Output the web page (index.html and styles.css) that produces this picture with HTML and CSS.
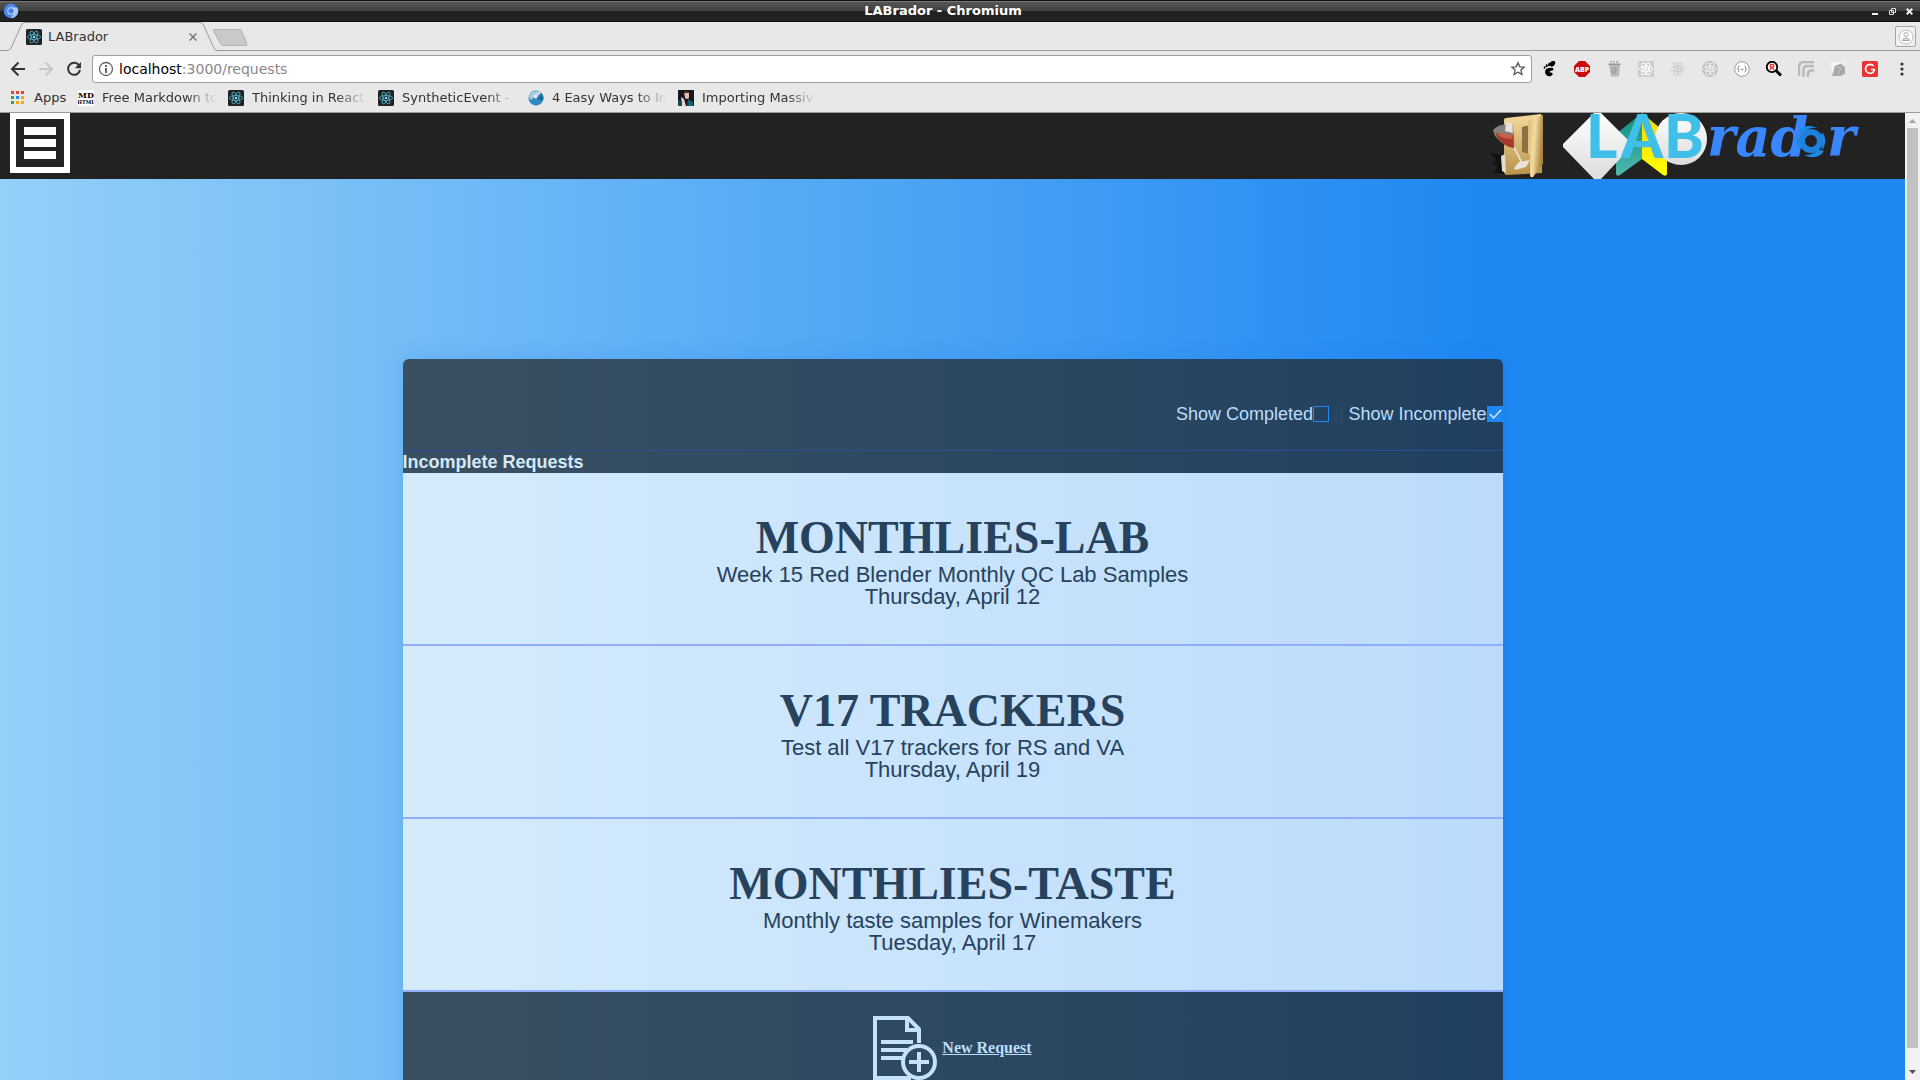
FILE: index.html
```html
<!DOCTYPE html>
<html lang="en">
<head>
<meta charset="utf-8">
<title>LABrador</title>
<link rel="stylesheet" href="styles.css">
</head>
<body>
<svg class="defs" width="0" height="0" aria-hidden="true">
  <symbol id="atom" viewBox="0 0 16 16">
    <g fill="none" stroke="currentColor"><ellipse cx="8" cy="8" rx="6.6" ry="2.6"/><ellipse cx="8" cy="8" rx="6.6" ry="2.6" transform="rotate(60 8 8)"/><ellipse cx="8" cy="8" rx="6.6" ry="2.6" transform="rotate(120 8 8)"/></g>
    <circle cx="8" cy="8" r="1.4" fill="currentColor"/>
  </symbol>
  <symbol id="react" viewBox="0 0 16 16">
    <rect width="16" height="16" rx="1.5" fill="#222"/>
    <g fill="none" stroke="#53b8d4" stroke-width=".8"><ellipse cx="8" cy="8" rx="6.6" ry="2.5"/><ellipse cx="8" cy="8" rx="6.6" ry="2.5" transform="rotate(60 8 8)"/><ellipse cx="8" cy="8" rx="6.6" ry="2.5" transform="rotate(120 8 8)"/></g>
    <circle cx="8" cy="8" r="1.3" fill="#7be0f8"/>
  </symbol>
</svg>

<div class="titlebar">
  <svg width="16" height="16" viewBox="0 0 16 16" aria-hidden="true"><circle cx="8" cy="8" r="7.2" fill="#4a87ec"/><path d="M8 4.4h6.2A7.2 7.2 0 0 1 8 15.2l3-5.2z" fill="#a8c7fa"/><circle cx="8" cy="8" r="3.7" fill="#c7dafa"/><circle cx="8" cy="8" r="2.7" fill="#3f7fe8"/></svg>
  <span class="window-title">LABrador - Chromium</span>
  <div class="window-buttons">
    <button aria-label="Minimize"><svg width="7" height="7"><path d="M0 6h6" stroke="#eee" stroke-width="2"/></svg></button>
    <button aria-label="Restore"><svg width="7" height="7"><path d="M2.5.5h4v4h-4zM.5 2.5h4v4h-4z" fill="none" stroke="#ddd"/></svg></button>
    <button aria-label="Close"><svg width="7" height="7"><path d="M.7.7l5.6 5.6M6.3.7L.7 6.3" stroke="#eee" stroke-width="2"/></svg></button>
  </div>
</div>

<div class="tabstrip">
  <div class="tab">
    <svg class="tab-shape" width="250" height="29" viewBox="0 0 250 29" aria-hidden="true">
      <path d="M0 28.5h7q3 0 4-2.500L22 2Q23 .5 25 .5H200Q202 .5 203 2L214 26q1 2.500 3 2.500H250V29H0z" fill="#e8e8e8"/>
      <path d="M0 28.500h7q3 0 4-2.500L22 2Q23 .5 25 .5H200Q202 .5 203 2L214 26q1 2.500 3 2.500H250" fill="none" stroke="#9b9b9b"/>
      <path d="M214 7.500h26q1 0 1.500 1L247 22q.4 1.500-1 1.500H223q-1.500 0-2-1L213.400 9q-.4-1.500.6-1.500z" fill="#c9c9c9" stroke="#b2b2b2"/>
    </svg>
    <svg width="16" height="16" aria-hidden="true"><use href="#react"/></svg>
    <span class="tab-title">LABrador</span>
    <button aria-label="Close tab"><svg width="8" height="8"><path d="M.5.5l7 7M7.500.5l-7 7" stroke="#777" stroke-width="1.500"/></svg></button>
  </div>
  <button class="profile" aria-label="Profile"><svg width="16" height="16" viewBox="0 0 16 16"><circle cx="8" cy="8" r="7" fill="#fff" stroke="#bbb"/><circle cx="8" cy="5.500" r="2" fill="#fff" stroke="#aaa"/><path d="M4.500 11.500q0-2.500 3.500-2.500t3.500 2.500z" fill="#ddd" stroke="#aaa"/></svg></button>
</div>

<div class="toolbar">
  <button aria-label="Back"><svg width="16" height="16"><path d="M15 8H2.500M8.500 1.500L2 8l6.500 6.500" fill="none" stroke="#333" stroke-width="2"/></svg></button>
  <button aria-label="Forward"><svg width="16" height="16"><path d="M1 8h12.500M7.500 1.500L14 8l-6.500 6.500" fill="none" stroke="#c8c8c8" stroke-width="2"/></svg></button>
  <button aria-label="Reload"><svg width="16" height="16"><path d="M13.300 4.800A6 6 0 1 0 14 9" fill="none" stroke="#333" stroke-width="2"/><path d="M15 1v6.200H8.800z" fill="#333"/></svg></button>
  <div class="omnibox">
    <svg width="16" height="16" aria-hidden="true"><circle cx="8" cy="8" r="6.500" fill="none" stroke="#666" stroke-width="1.300"/><path d="M8 7v5M8 4v2" stroke="#555" stroke-width="1.800"/></svg>
    <div class="url" role="textbox" aria-label="Address" contenteditable="true" spellcheck="false">localhost<span>:3000/requests</span></div>
    <button aria-label="Bookmark this page"><svg width="16" height="16" viewBox="0 0 16 16"><path d="M8 1.800l1.800 4 4.400.4-3.300 2.900 1 4.300L8 11.200l-3.900 2.200 1-4.300L1.800 6.200l4.400-.4z" fill="none" stroke="#555" stroke-width="1.300"/></svg></button>
  </div>
  <div class="extensions">
    <svg width="16" height="16"><g fill="#000"><ellipse cx="10.500" cy="3.300" rx="2.300" ry="3.200" transform="rotate(35 11.500 3)"/><ellipse cx="7.300" cy="3.400" rx="1.100" ry="1.900" transform="rotate(15 7 3)"/><ellipse cx="4.700" cy="4.700" rx="1" ry="1.600"/><ellipse cx="2.600" cy="6.500" rx=".9" ry="1.300"/><path d="M3.500 9C5 6.500 11 6 11.500 8.200c.3 1.800-4.200 1.500-4 2.800.2 1 2.400.2 3 1.200.7 1.600-1.500 3.300-3.500 3.100C4 15 2.300 11.500 3.500 9z"/></g></svg>
    <svg width="16" height="16"><path d="M5 0h6l5 5v6l-5 5H5l-5-5V5z" fill="#c70d0d"/><text x="8" y="11" class="abp">ABP</text></svg>
    <svg width="16" height="16"><path d="M3 3h11l-1 12q-4 1.500-8 0z" fill="#b8b8b8"/><path d="M2.500 2.500h12v1.500h-12z" fill="#999"/><path d="M4 .8h9" stroke="#888" stroke-dasharray="2 1"/><path d="M6 7h4v3H6v2h4" fill="none" stroke="#999"/></svg>
    <svg width="16" height="16"><path d="M0 0h16v16H0z" fill="#cdcdcd"/><use href="#atom" color="#fff"/></svg>
    <svg width="16" height="16"><use href="#atom" color="#cdcdcd"/></svg>
    <svg width="16" height="16"><circle cx="8" cy="8" r="8" fill="#c0c0c0"/><use href="#atom" color="#eee"/></svg>
    <svg width="16" height="16"><circle cx="8" cy="8" r="7.300" fill="#fff" stroke="#999"/><path d="M5.500 5Q4 5 4.500 6.500 4.500 8 3.500 8q1 0 1 1.500Q4 11 5.500 11M10.500 5Q12 5 11.500 6.500q0 1.500 1 1.500-1 0-1 1.500.5 1.500-1 1.500M6.500 8.500h3" fill="none" stroke="#888"/></svg>
    <svg width="16" height="16"><path d="M10 9.500l5 5" stroke="#000" stroke-width="3"/><circle cx="6" cy="6" r="5.200" fill="#fff" stroke="#000" stroke-width="1.800"/><path d="M4.500 9V3.500h2q1.500.3 1.500 1.500T6 6.500H5M6.200 6.500L8 9" fill="none" stroke="#e33" stroke-width="1.300"/></svg>
    <svg width="16" height="16"><path d="M1 15V6q0-5 5-5h10M5.500 16V9q0-4 4-4H16M10 16v-3q0-3.500 3-3.500h3" fill="none" stroke="#b9b9b9" stroke-width="2.500"/></svg>
    <svg width="16" height="16"><path d="M1 1h13l1 13H2z" fill="#f4f4f4"/><path d="M5 5l6-2.500L15 6v7l-5 2H3q-2-1 0-3z" fill="#a9a9a9"/><path d="M6 6l5 1-3 6" fill="none" stroke="#c4c4c4"/></svg>
    <svg width="16" height="16"><rect width="16" height="16" rx="1.500" fill="#e93434"/><path d="M11.500 5A4.500 4.500 0 1 0 12.500 8.500H9" fill="none" stroke="#fff" stroke-width="1.700"/></svg>
    <svg width="16" height="16"><g fill="#333"><circle cx="8" cy="3" r="1.600"/><circle cx="8" cy="8" r="1.600"/><circle cx="8" cy="13" r="1.600"/></g></svg>
  </div>
</div>

<nav class="bookmarks">
  <a href="#" class="apps"><svg width="13" height="13"><path d="M0 0h3v3H0zM5 0h3v3H5zM10 0h3v3h-3z" fill="#ea4335"/><path d="M0 5h3v3H0zM0 10h3v3H0z" fill="#34a058"/><path d="M5 5h3v3H5z" fill="#1a8cff"/><path d="M10 5h3v3h-3zM5 10h3v3H5zM10 10h3v3h-3z" fill="#f5a800"/></svg>Apps</a>
  <a href="#"><svg width="16" height="16"><path d="M0 0h16v16H0z" fill="#fff"/><text x="8" y="8" class="md">MD</text><text x="8" y="14" class="md-sub">HTML</text></svg><span>Free Markdown to</span></a>
  <a href="#"><svg width="16" height="16"><use href="#react"/></svg><span>Thinking in React</span></a>
  <a href="#"><svg width="16" height="16"><use href="#react"/></svg><span>SyntheticEvent - R</span></a>
  <a href="#"><svg width="16" height="16"><circle cx="8" cy="8" r="7.500" fill="#2c8cbf"/><path d="M2 4Q6-1 12 2q-1 4-5 4L3 10Q0 8 2 4z" fill="#a6cde0"/><path d="M9 9l5-5q3 4 0 7z" fill="#1a6b9c"/><circle cx="7.500" cy="6.500" r="2" fill="#dfe9ee"/><path d="M8 6l5-5" stroke="#ddd" stroke-width="2"/></svg><span>4 Easy Ways to Im</span></a>
  <a href="#"><svg width="16" height="16"><path d="M0 0h16v16H0z" fill="#15161f"/><path d="M6 2q4-2 5 1v5q-2 2-4 0z" fill="#e6bca8"/><path d="M6 2q3-2 5 0v1H6z" fill="#4a2a22"/><path d="M10 9l5 3v4H9z" fill="#17616f"/><path d="M3 7l3 2 2 7H4z" fill="#e9d4cc"/><path d="M0 10l4 1v5H0z" fill="#164c58"/></svg><span>Importing Massive</span></a>
</nav>

<div class="viewport">
  <div class="page">
    <header class="site-header">
      <button class="menu" aria-label="Menu"><i></i><i></i><i></i></button>
      <div class="brand">
        <a href="#" aria-label="Wine folder"><svg width="64" height="66" viewBox="0 0 64 66">
          <defs><linearGradient id="fold" x1="0" y1="0" x2="0" y2="1"><stop offset="0" stop-color="#f4d99c"/><stop offset="1" stop-color="#b8924c"/></linearGradient><linearGradient id="flap" x1="0" y1="0" x2="1" y2="0.300"><stop offset="0" stop-color="#d9b873"/><stop offset=".5" stop-color="#f3dba0"/><stop offset="1" stop-color="#a9843e"/></linearGradient></defs>
          <path d="M0 40l16 3v18L4 60l4-7-6-2 5-4z" fill="#111"/>
          <path d="M14 7q0-2 2-2l35-4 1 3v56l-36 2-2-2z" fill="url(#fold)"/>
          <path d="M32 14l8-2v29l-8-2z" fill="#8c7142"/>
          <path d="M38 8l15-6v49L43 64q-3 1-3-2V42l-2-2z" fill="url(#flap)"/>
          <path d="M11 43l4-2 1 19-4-2z" fill="#e4dcc8"/>
          <path d="M24 34l8 16" stroke="#e9dcc2" stroke-width="2"/>
          <path d="M3 17q6-7 19-6 3 10 2 24-11-2-19-12z" fill="#85807b"/>
          <path d="M16 9l6 1 1 10-8-2z" fill="#e8e2d9"/>
          <path d="M6 20l17 2 1 13q-10-1-17-11z" fill="#a83928"/>
          <path d="M8 20l15 2-1 4q-8 0-13-3z" fill="#c8614a"/>
          <path d="M24 55l5-6 11-2-4 7-11 3z" fill="#e8e2d8"/>
        </svg></a>
        <a href="#" aria-label="LABrador home"><svg width="300" height="66" viewBox="0 0 300 66">
          <defs><linearGradient id="pale" x1="0" y1="0" x2="0" y2="1"><stop offset="0" stop-color="#fff"/><stop offset="1" stop-color="#dcdcdc"/></linearGradient><linearGradient id="teal" x1="0" y1="0" x2="0" y2="1"><stop offset="0" stop-color="#0c8d7f"/><stop offset="1" stop-color="#50b8ae"/></linearGradient><linearGradient id="gold" x1="0" y1="0" x2="0" y2="1"><stop offset="0" stop-color="#ffd500"/><stop offset="1" stop-color="#ff0"/></linearGradient></defs>
          <path d="M79 0L53 21v40q1 3 4 1l22-16z" fill="url(#teal)"/>
          <path d="M79 0l25 21v40q-1 3-4 1L79 46z" fill="url(#gold)"/>
          <path d="M31 0h7l30 30q2 2 0 4L38 66h-7L0 34q-1-2 0-3z" fill="url(#pale)"/>
          <circle cx="118" cy="26" r="26" fill="url(#pale)"/>
          <g class="logo-lab"><text x="23" y="45">L</text><text x="58" y="45">A</text><text x="101" y="45">B</text></g>
          <g class="logo-rador"><text x="144" y="43">rad</text><text x="264" y="43">r</text></g>
          <circle cx="248" cy="28" r="9" fill="none" stroke="#1e82dd" stroke-width="6"/>
          <path d="M235 17q8-7 20-2-10-1-15 5zM259 19q7 9-1 20 3-8 0-15zM261 38q-7 10-20 4 10 0 14-5zM237 37q-6-8-2-18 0 9 4 13z" fill="#1e88e5"/>
        </svg></a>
      </div>
    </header>
    <main class="requests">
      <form class="filters">
        <label for="completed">Show Completed</label><input type="checkbox" id="completed"><span class="divider">||</span><label for="incomplete">Show Incomplete</label><input type="checkbox" id="incomplete" checked>
      </form>
      <h2 class="list-title">Incomplete Requests</h2>
      <ul class="list">
        <li><h3>MONTHLIES-LAB</h3><p>Week 15 Red Blender Monthly QC Lab Samples</p><p>Thursday, April 12</p></li>
        <li><h3>V17 TRACKERS</h3><p>Test all V17 trackers for RS and VA</p><p>Thursday, April 19</p></li>
        <li><h3>MONTHLIES-TASTE</h3><p>Monthly taste samples for Winemakers</p><p>Tuesday, April 17</p></li>
      </ul>
      <footer class="new-request">
        <a href="#"><svg width="64" height="64" viewBox="0 0 64 64" fill="none" stroke="currentColor" stroke-width="4" aria-hidden="true"><path d="M46 27V13L35 2H2v60h36"/><path d="M34 2v12h12" /><path d="M8 26h32M8 34h26M8 42h22"/><circle cx="46" cy="46" r="16"/><path d="M46 36v20M36 46h20"/></svg><span>New Request</span></a>
      </footer>
    </main>
  </div>
  <div class="scrollbar" aria-hidden="true">
    <svg width="15" height="15"><path d="M4 10l3.500-4 3.500 4z" fill="#a3a3a3"/></svg>
    <div class="thumb"></div>
    <svg width="15" height="15"><path d="M4 5l3.500 4L11 5z" fill="#505050"/></svg>
  </div>
</div>
</body>
</html>
```

FILE: styles.css
```css
* { box-sizing: border-box; margin: 0; padding: 0; }
body { display: flex; flex-direction: column; height: 100vh; overflow: hidden; background: #e8e8e8; color: #333; font: 13px/16px "DejaVu Sans", sans-serif; }
svg { display: block; flex: none; }
.defs { position: absolute; }
button { display: flex; align-items: center; justify-content: center; border: 0; background: none; font: inherit; }
a { color: inherit; text-decoration: none; }

.titlebar { display: grid; grid-template-columns: 16px 1fr 46px; align-items: center; flex: none; height: 22px; padding: 0 7px 0 3px; border: solid #111; border-width: 1px 0; background: linear-gradient(#777 0 1px, #555 1px, #404040 10px, #222 10px); }
.window-title { color: #fff; font-weight: bold; text-align: center; }
.window-buttons { display: flex; justify-content: flex-end; gap: 10px; }

.tabstrip { display: flex; justify-content: space-between; flex: none; height: 29px; border-bottom: 1px solid #9b9b9b; }
.tab { position: relative; display: flex; align-items: center; width: 250px; height: 29px; padding: 0 53px 0 26px; }
.tab-shape { position: absolute; left: 0; top: 0; }
.tab svg { z-index: 1; }
.tab .tab-shape { z-index: 0; }
.tab-title { z-index: 1; flex: 1; padding-left: 6px; }
.profile { width: 21px; height: 21px; margin: 4px 4px 0 0; border: 1px solid #a5a5a5; border-radius: 2px; background: #f0f0f0; }

.toolbar { display: flex; align-items: center; gap: 12px; flex: none; height: 36px; padding: 0 10px; }
.omnibox { display: flex; align-items: center; gap: 5px; flex: 1; height: 28px; margin: 0 -2px; padding: 0 5px; border: 1px solid #a0a0a0; border-radius: 3px; background: #fff; font-size: 14px; }
.url { flex: 1; color: #000; outline: 0; }
.url span { color: #888; }
.extensions { display: flex; gap: 16px; }
.abp { fill: #fff; font: 900 7px "Open Sans", sans-serif; text-anchor: middle; }

.bookmarks { display: flex; align-items: center; gap: 12px; flex: none; height: 26px; padding: 0 11px 4px; border-bottom: 1px solid #9b9b9b; }
.bookmarks a { display: flex; align-items: center; gap: 8px; width: 138px; }
.bookmarks .apps { gap: 10px; width: 55px; }
.bookmarks span { flex: 1; overflow: hidden; white-space: nowrap; mask-image: linear-gradient(to right, #000 84px, transparent 114px); }
.md { fill: #000; font: bold 8px "DejaVu Serif", serif; text-anchor: middle; }
.md-sub { fill: #000; font: bold 5px "DejaVu Serif", serif; text-anchor: middle; }

.viewport { display: grid; grid-template-columns: 1fr 15px; flex: 1; min-height: 0; }
.page { overflow: hidden; background: linear-gradient(to right, #94d0f8, #1e88f2 78%); }
.scrollbar { display: flex; flex-direction: column; background: #f1f1f1; }
.thumb { flex: 1; margin: 0 2px; background: #c1c1c1; }
.scrollbar svg:last-child { margin-top: 17px; }

.site-header { display: flex; justify-content: space-between; height: 66px; padding: 0 42px 0 10px; background: #222; }
.menu { flex-direction: column; gap: 4px; width: 60px; height: 60px; border: 6px solid #fff; }
.menu i { width: 32px; height: 8px; background: #fff; }
.brand { display: flex; gap: 9px; }
.logo-lab { fill: #40c0e8; font: 900 60px Lato, sans-serif; }
.logo-rador { fill: #3a86ff; font: italic bold 54px "DejaVu Serif", serif; }

.requests { max-width: 1100px; margin: 180px auto 0; border-radius: 6px 6px 0 0; overflow: hidden; font: 18px/22px "Liberation Sans", Arial, sans-serif; box-shadow: 0 0 20px rgba(30, 110, 220, .2); }
.filters { display: flex; align-items: center; justify-content: flex-end; padding: 44px 0 25px; background: rgba(34, 34, 34, .7); color: #bbdefb; }
.filters input { appearance: none; width: 16px; height: 16px; border: 1px solid #1e88f2; }
.filters input:checked { background: #1e88f2 url("data:image/svg+xml,%3Csvg xmlns='http://www.w3.org/2000/svg' width='14' height='14'%3E%3Cpath d='M2 7l3.500 4L13 3' fill='none' stroke='%23d5e9fb' stroke-width='1.500'/%3E%3C/svg%3E") center no-repeat; }
.divider { padding: 0 5px; color: #2f4b68; }
.list-title { border-top: 1px solid #2b4c98; background: rgba(34, 34, 34, .7); color: #d5e9fb; font-size: 18px; line-height: 22px; }
.list { list-style: none; color: #26425c; text-align: center; }
.list li { padding: 38px 0 36px; border-bottom: 2px solid #90aefb; background: rgba(255, 255, 255, .7); }
.list h3 { font: bold 46px/53px "Liberation Serif", "Times New Roman", serif; }
.list p { font-size: 22px; line-height: 22px; }
.new-request { display: flex; justify-content: center; padding: 24px 0; background: rgba(34, 34, 34, .7); }
.new-request a { display: flex; align-items: center; gap: 5px; color: #bbdefb; }
.new-request svg { color: #c5e1fb; }
.new-request span { font: bold 16px/20px "Liberation Serif", "Times New Roman", serif; text-decoration: underline; }
```
